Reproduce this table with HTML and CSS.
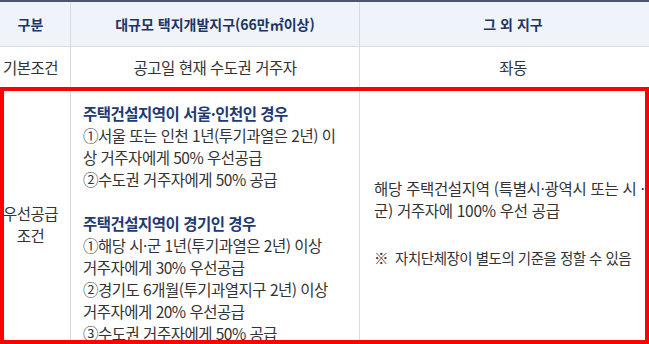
FILE: index.html
```html
<!DOCTYPE html>
<html lang="ko">
<head>
    <meta charset="UTF-8">
    <title>우선공급 조건</title>
    <link rel="stylesheet" href="styles.css">
</head>
<body>
    <div class="board">
        <table class="supply-table">
            <colgroup>
                <col class="col-kind">
                <col class="col-large">
                <col class="col-other">
            </colgroup>
            <thead>
                <tr>
                    <th>구분</th>
                    <th>대규모 택지개발지구(66만㎡이상)</th>
                    <th>그 외 지구</th>
                </tr>
            </thead>
            <tbody>
                <tr class="row-basic">
                    <td class="kind">기본조건</td>
                    <td class="center">공고일 현재 수도권 거주자</td>
                    <td class="center">좌동</td>
                </tr>
                <tr class="row-priority">
                    <td class="kind">우선공급<br>조건</td>
                    <td class="detail">
                        <strong>주택건설지역이 서울·인천인 경우</strong><br>
                        ①서울 또는 인천 1년(투기과열은 2년) 이<br>
                        상 거주자에게 50% 우선공급<br>
                        ②수도권 거주자에게 50% 공급<br>
                        <br>
                        <strong>주택건설지역이 경기인 경우</strong><br>
                        ①해당 시·군 1년(투기과열은 2년) 이상<br>
                        거주자에게 30% 우선공급<br>
                        ②경기도 6개월(투기과열지구 2년) 이상<br>
                        거주자에게 20% 우선공급<br>
                        ③수도권 거주자에게 50% 공급
                    </td>
                    <td class="detail other">
                        해당 주택건설지역 (특별시·광역시 또는 시 ·<br>
                        군) 거주자에 100% 우선 공급
                        <p class="note">※&nbsp; 자치단체장이 별도의 기준을 정할 수 있음</p>
                    </td>
                </tr>
            </tbody>
        </table>
        <!-- 강조 표시 -->
        <div class="highlight"></div>
    </div>
</body>
</html>
```

FILE: styles.css
```css
* {
    box-sizing: border-box;
    margin: 0;
    padding: 0;
}

body {
    font-family: "Noto Sans CJK KR", "Noto Sans", sans-serif;
    background: white;
    color: #333;
    overflow: hidden;
}

.board {
    position: relative;
    width: 649px;
    height: 344px;
    overflow: hidden;
}

.supply-table {
    width: 676px;
    margin-left: -10px;
    border-collapse: collapse;
    border-top: 2px solid #50566e;
    font-size: 15.5px;
    letter-spacing: -0.5px;
    table-layout: fixed;
}

.col-kind  { width: 80px; }
.col-large { width: 289px; }
.col-other { width: 307px; }

.supply-table th,
.supply-table td {
    border: 1px solid #d9dbe2;
    border-top: none;
    vertical-align: middle;
}

.supply-table th {
    height: 45px;
    background: #eff3fa;
    color: #1f3466;
    font-size: 14px;
    font-weight: 700;
    letter-spacing: 0;
    text-align: center;
}

.row-basic td {
    height: 41px;
}

.kind,
.center {
    text-align: center;
}

.kind {
    line-height: 22px;
}

.detail {
    padding: 14px 12px 16px;
    line-height: 22px;
}

.detail strong {
    color: #233a72;
    font-weight: 700;
}

.detail.other {
    padding-left: 14px;
    letter-spacing: -0.3px;
}

.note {
    margin-top: 26px;
    font-size: 14.5px;
    letter-spacing: -0.5px;
}

.highlight {
    position: absolute;
    left: 0;
    top: 87px;
    width: 649px;
    height: 257px;
    border: 4px solid #ff0000;
}
```
